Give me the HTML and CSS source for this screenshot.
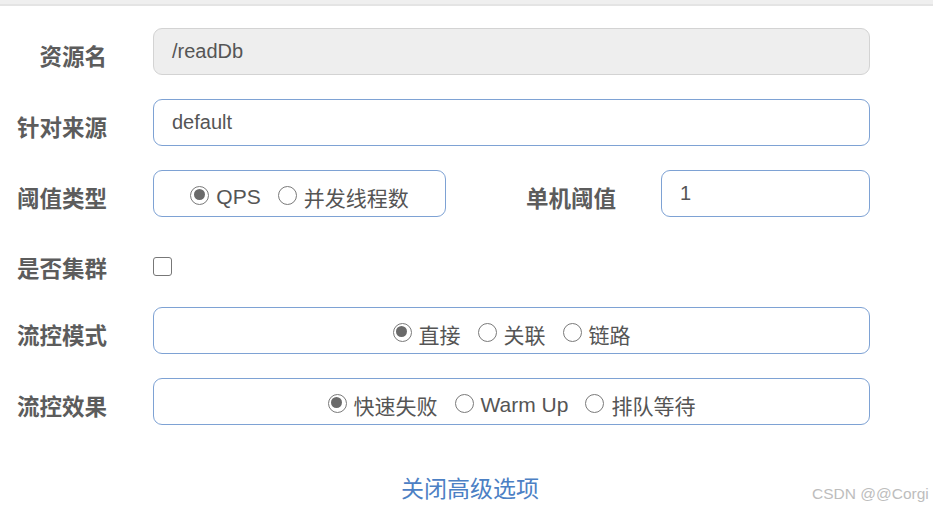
FILE: index.html
```html
<!DOCTYPE html>
<html lang="zh-CN">
<head>
<meta charset="utf-8">
<title>流控规则</title>
<link rel="stylesheet" href="styles.css">
</head>
<body>
<div class="topbar"></div>
<form class="form">
  <div class="row">
    <label class="label">资源名</label>
    <div class="field disabled">/readDb</div>
  </div>
  <div class="row">
    <label class="label">针对来源</label>
    <div class="field">default</div>
  </div>
  <div class="row">
    <label class="label">阈值类型</label>
    <div class="split">
      <div class="field radios">
        <span class="radio on"></span><span class="rtext">QPS</span>
        <span class="radio"></span><span class="rtext">并发线程数</span>
      </div>
      <label class="label">单机阈值</label>
      <div class="field">1</div>
    </div>
  </div>
  <div class="row row-check">
    <label class="label">是否集群</label>
    <div><span class="checkbox"></span></div>
  </div>
  <div class="row">
    <label class="label">流控模式</label>
    <div class="field radios">
      <span class="radio on"></span><span class="rtext">直接</span>
      <span class="radio"></span><span class="rtext">关联</span>
      <span class="radio"></span><span class="rtext">链路</span>
    </div>
  </div>
  <div class="row">
    <label class="label">流控效果</label>
    <div class="field radios">
      <span class="radio on"></span><span class="rtext">快速失败</span>
      <span class="radio"></span><span class="rtext">Warm Up</span>
      <span class="radio"></span><span class="rtext">排队等待</span>
    </div>
  </div>
  <div class="link-row"><a class="link">关闭高级选项</a></div>
</form>
<div class="watermark">CSDN @@Corgi</div>
</body>
</html>
```

FILE: styles.css
```css
* { box-sizing: border-box; }
html, body { margin: 0; padding: 0; background: #fff; }
body {
  width: 933px;
  height: 510px;
  overflow: hidden;
  position: relative;
  font-family: "Liberation Sans", "Noto Sans CJK SC", sans-serif;
  color: #555;
}
.topbar {
  height: 6px;
  background: #efefef;
  border-bottom: 2px solid #e4e4e4;
}
.form {
  width: 870px;
  padding-top: 22px;
  display: flex;
  flex-direction: column;
  gap: 24px;
}
.row {
  display: grid;
  grid-template-columns: 107px 1fr;
  column-gap: 46px;
  align-items: center;
  height: 47px;
}
.label {
  text-align: right;
  font-family: "Noto Sans CJK SC", sans-serif;
  font-weight: bold;
  font-size: 22.5px;
  line-height: 30px;
  color: #5c5c5c;
  white-space: nowrap;
  padding-top: 6px;
}
.field {
  height: 47px;
  border: 1px solid #7ea2d4;
  border-radius: 9px;
  padding: 0 18px;
  display: flex;
  align-items: center;
  font-size: 20px;
  color: #555;
  background: #fff;
}
.field.disabled {
  background: #eeeeee;
  border-color: #d3d3d3;
}
.split {
  display: grid;
  grid-template-columns: 293px 1fr 209px;
  column-gap: 45px;
  align-items: center;
}
.radios {
  justify-content: center;
  padding-top: 7px;
}
.radio {
  width: 19px;
  height: 19px;
  border: 1.5px solid #7a7a7a;
  border-radius: 50%;
  display: inline-block;
  position: relative;
  margin-right: 7px;
  flex: none;
  margin-top: -4px;
}
.radio.on::after {
  content: "";
  position: absolute;
  left: 2.5px;
  top: 2.5px;
  width: 11px;
  height: 11px;
  border-radius: 50%;
  background: #6a6a6a;
}
.rtext {
  font-family: "Liberation Sans", "Noto Sans CJK SC", sans-serif;
  font-size: 21px;
  color: #555;
  margin-right: 17px;
}
.rtext:last-child { margin-right: 0; }
.row-check {
  height: 42px;
  padding-top: 8px;
}
.row-check .label { padding-top: 2px; }
.checkbox {
  display: block;
  width: 19px;
  height: 19px;
  border: 1.5px solid #777;
  border-radius: 3px;
}
.link-row {
  text-align: center;
  padding-left: 70px;
  margin-top: 21px;
}
.link {
  font-family: "Noto Sans CJK SC", sans-serif;
  font-size: 23px;
  color: #4c80c4;
  text-decoration: none;
}
.watermark {
  position: absolute;
  left: 812px;
  top: 485px;
  font-family: "Liberation Sans", sans-serif;
  font-size: 15.5px;
  color: #bdbdbd;
  white-space: nowrap;
}
```
